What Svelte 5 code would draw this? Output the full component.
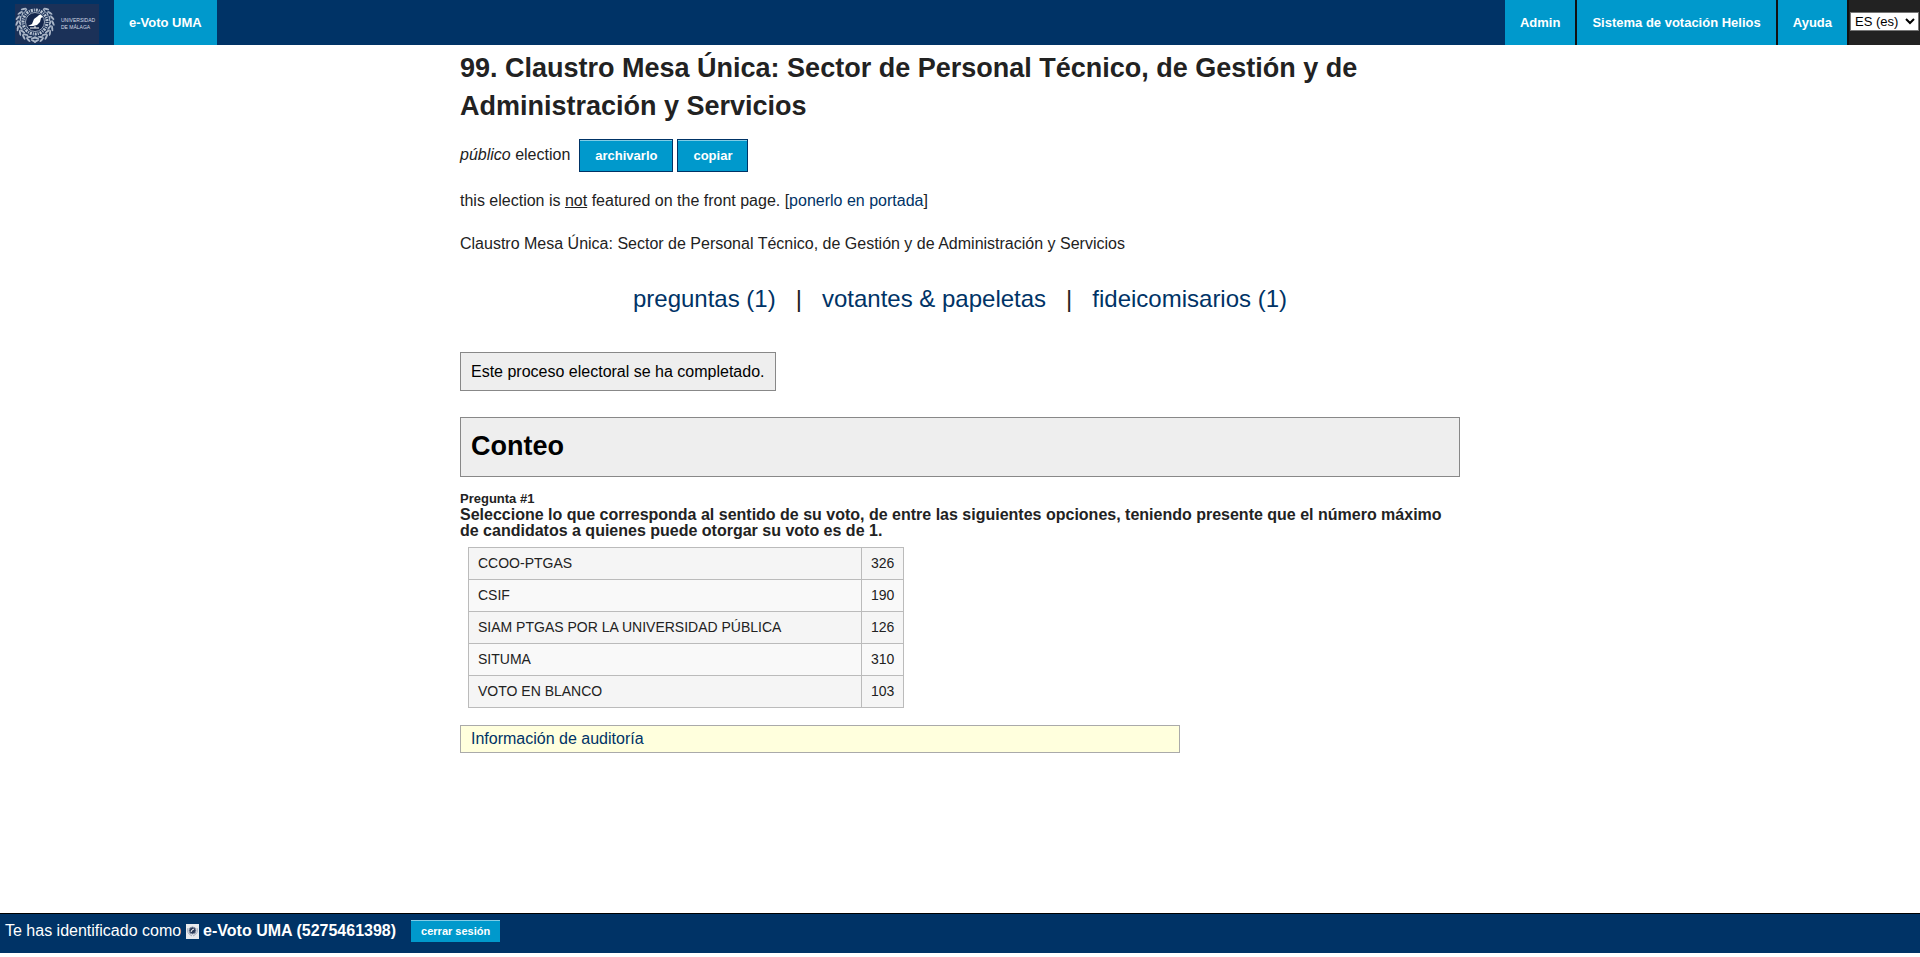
<script>
	let language = $state('es');

	const menu = ['Admin', 'Sistema de votación Helios', 'Ayuda'];

	const results = [
		{ answer: 'CCOO-PTGAS', count: 326 },
		{ answer: 'CSIF', count: 190 },
		{ answer: 'SIAM PTGAS POR LA UNIVERSIDAD PÚBLICA', count: 126 },
		{ answer: 'SITUMA', count: 310 },
		{ answer: 'VOTO EN BLANCO', count: 103 }
	];

	// laurel leaves, mirrored on both sides of the seal
	const leaves = [5, 22, 39, 56, 73, 90, 107, 124, 141];
</script>

<div class="page">
	<nav class="topbar">
		<a class="logo" href="#inicio" aria-label="Universidad de Málaga">
			<svg width="84" height="40" viewBox="0 0 84 40">
				<rect width="84" height="40" fill="#1b3158" />
				<g fill="#a9b5c7">
					{#each leaves as angle}
						<g transform="rotate({angle} 20 19)">
							<ellipse cx="20" cy="37" rx="3" ry="1" transform="rotate(24 20 37)" />
							<ellipse cx="20" cy="34" rx="3" ry="1" transform="rotate(-24 20 34)" />
						</g>
						<g transform="rotate({-angle} 20 19)">
							<ellipse cx="20" cy="37" rx="3" ry="1" transform="rotate(-24 20 37)" />
							<ellipse cx="20" cy="34" rx="3" ry="1" transform="rotate(24 20 34)" />
						</g>
					{/each}
				</g>
				<circle cx="20" cy="18" r="14" fill="#1b3158" />
				<circle cx="20" cy="18" r="12" fill="none" stroke="#b9c3d2" stroke-width="3" stroke-dasharray="1 1 2 1" />
				<circle cx="20" cy="18" r="9.5" fill="#14264c" stroke="#b9c3d2" stroke-width="0.8" />
				<path d="M13 22l4-2 2-5 4-3 1-1 2 0 2 2-2 1-1 4-3 3-4 1z" fill="#fff" />
				<path d="M15 24h9M20 22v2" stroke="#fff" />
				<text x="46" y="18">UNIVERSIDAD</text>
				<text x="46" y="25">DE MÁLAGA</text>
			</svg>
		</a>
		<a class="item" href="#inicio">e-Voto UMA</a>

		<div class="right">
			{#each menu as item}
				<a class="item" href="#menu">{item}</a>
			{/each}
			<div class="language">
				<select aria-label="Idioma" bind:value={language}>
					<option value="es">ES (es)</option>
					<option value="en">EN (en)</option>
				</select>
			</div>
		</div>
	</nav>

	<main>
		<h2 class="title">99. Claustro Mesa Única: Sector de Personal Técnico, de Gestión y de Administración y Servicios</h2>

		<div class="kind">
			<span><em>público</em> election</span>
			<button>archivarlo</button>
			<button>copiar</button>
		</div>

		<p class="featured">this election is <u>not</u> featured on the front page. [<a href="#portada">ponerlo en portada</a>]</p>

		<p class="description">Claustro Mesa Única: Sector de Personal Técnico, de Gestión y de Administración y Servicios</p>

		<div class="sections">
			<a href="#preguntas">preguntas (1)</a>
			<span>|</span>
			<a href="#votantes">votantes &amp; papeletas</a>
			<span>|</span>
			<a href="#fideicomisarios">fideicomisarios (1)</a>
		</div>

		<div class="status">Este proceso electoral se ha completado.</div>

		<div class="tally">
			<h2>Conteo</h2>
		</div>

		<div class="question">
			<small>Pregunta #1</small>
			<b>Seleccione lo que corresponda al sentido de su voto, de entre las siguientes opciones, teniendo presente que el número máximo de candidatos a quienes puede otorgar su voto es de 1.</b>
		</div>

		<table>
			<tbody>
				{#each results as result}
					<tr>
						<td class="answer">{result.answer}</td>
						<td class="count">{result.count}</td>
					</tr>
				{/each}
			</tbody>
		</table>

		<div class="audit"><a href="#auditoria">Información de auditoría</a></div>
	</main>

	<footer>
		<span>Te has identificado como</span>
		<svg width="13" height="15" viewBox="0 0 13 15">
			<rect width="13" height="15" fill="#e8eaee" />
			<path d="M2 4q-2 5 4 8M11 4q2 5-4 8" fill="none" stroke="#a3abba" />
			<circle cx="6.5" cy="6.5" r="3.5" fill="#2c3a58" stroke="#8a94a8" />
			<path d="M5 8l1-2 2-1" fill="none" stroke="#fff" />
		</svg>
		<b>e-Voto UMA (5275461398)</b>
		<button class="small">cerrar sesión</button>
	</footer>
</div>

<style>
	:global(body) {
		margin: 0;
		background: #fff;
		color: #222;
		font-family: "Liberation Sans", Arial, sans-serif;
		font-size: 16px;
		line-height: 24px;
	}

	* {
		box-sizing: border-box;
	}

	a {
		color: #003366;
		text-decoration: none;
	}

	.page {
		display: flex;
		flex-direction: column;
		min-height: 100vh;
		padding-bottom: 4px;
	}

	.topbar {
		display: flex;
		height: 45px;
		background: #003366;
	}

	.logo {
		width: 114px;
		padding: 4px 15px 0;
	}

	.logo svg {
		display: block;
	}

	.logo text {
		fill: #d5dce6;
		font-size: 5px;
	}

	.item {
		padding: 0 15px;
		background: #0099cc;
		color: #fff;
		font-size: 13px;
		font-weight: bold;
		line-height: 45px;
	}

	.right {
		display: flex;
		margin-left: auto;
	}

	.right .item {
		border-right: 2px solid #111;
	}

	.language {
		padding: 12px 1px 0;
		background: #222;
	}

	select {
		display: block;
		width: 69px;
		height: 19px;
		padding: 0;
		border: 1px solid #767676;
		border-radius: 0;
		background-color: #fff;
		color: #000;
		font-family: inherit;
		font-size: 13px;
	}

	main {
		width: 100%;
		max-width: 1000px;
		margin: 0 auto;
	}

	h2 {
		margin: 0;
		font-size: 27px;
		line-height: 38px;
	}

	.title {
		padding-top: 4px;
	}

	.kind {
		display: flex;
		gap: 4px;
		margin-top: 14px;
	}

	.kind span {
		margin: 4px 5px 0 0;
	}

	button {
		height: 33px;
		padding: 0 15px;
		border: 1px solid #003366;
		background: #0099cc;
		box-shadow: inset 0 1px 0 rgba(255, 255, 255, 0.5);
		color: #fff;
		font-family: inherit;
		font-size: 13px;
		font-weight: bold;
	}

	p {
		margin: 0;
	}

	.featured {
		margin-top: 17px;
	}

	.description {
		margin-top: 19px;
	}

	.sections {
		display: flex;
		justify-content: center;
		gap: 20px;
		margin-top: 25px;
		font-size: 24px;
		line-height: 36px;
	}

	.status {
		width: fit-content;
		margin-top: 35px;
		padding: 7px 10px 6px;
		border: 1px solid #888;
		background: #eee;
		color: #000;
	}

	.tally {
		margin-top: 26px;
		padding: 9px 10px 11px;
		border: 1px solid #888;
		background: #eee;
		color: #000;
	}

	.question {
		margin-top: 14px;
		line-height: 16px;
	}

	.question small {
		display: block;
		font-size: 13px;
		font-weight: bold;
	}

	.question b {
		display: block;
	}

	table {
		margin: 8px 0 0 8px;
		border-collapse: collapse;
		color: #222;
		font-size: 14px;
		line-height: 17px;
	}

	td {
		padding: 7px 9px;
		border: 1px solid #bbb;
	}

	tr {
		background: #f9f9f9;
	}

	tr:nth-child(odd) {
		background: #f5f5f5;
	}

	.answer {
		width: 393px;
	}

	.count {
		text-align: right;
	}

	.audit {
		width: 72%;
		margin-top: 17px;
		padding: 1px 10px;
		border: 1px solid #aaa;
		background: #ffffdd;
	}

	footer {
		display: flex;
		height: 40px;
		margin-top: auto;
		padding: 5px;
		border-top: 1px solid #000;
		background: #003366;
		color: #fff;
	}

	footer svg {
		margin: 5px 4px 0 5px;
	}

	.small {
		height: 22px;
		margin: 1px 0 0 15px;
		padding: 0 10px;
		border: 0;
		font-size: 11px;
	}
</style>
